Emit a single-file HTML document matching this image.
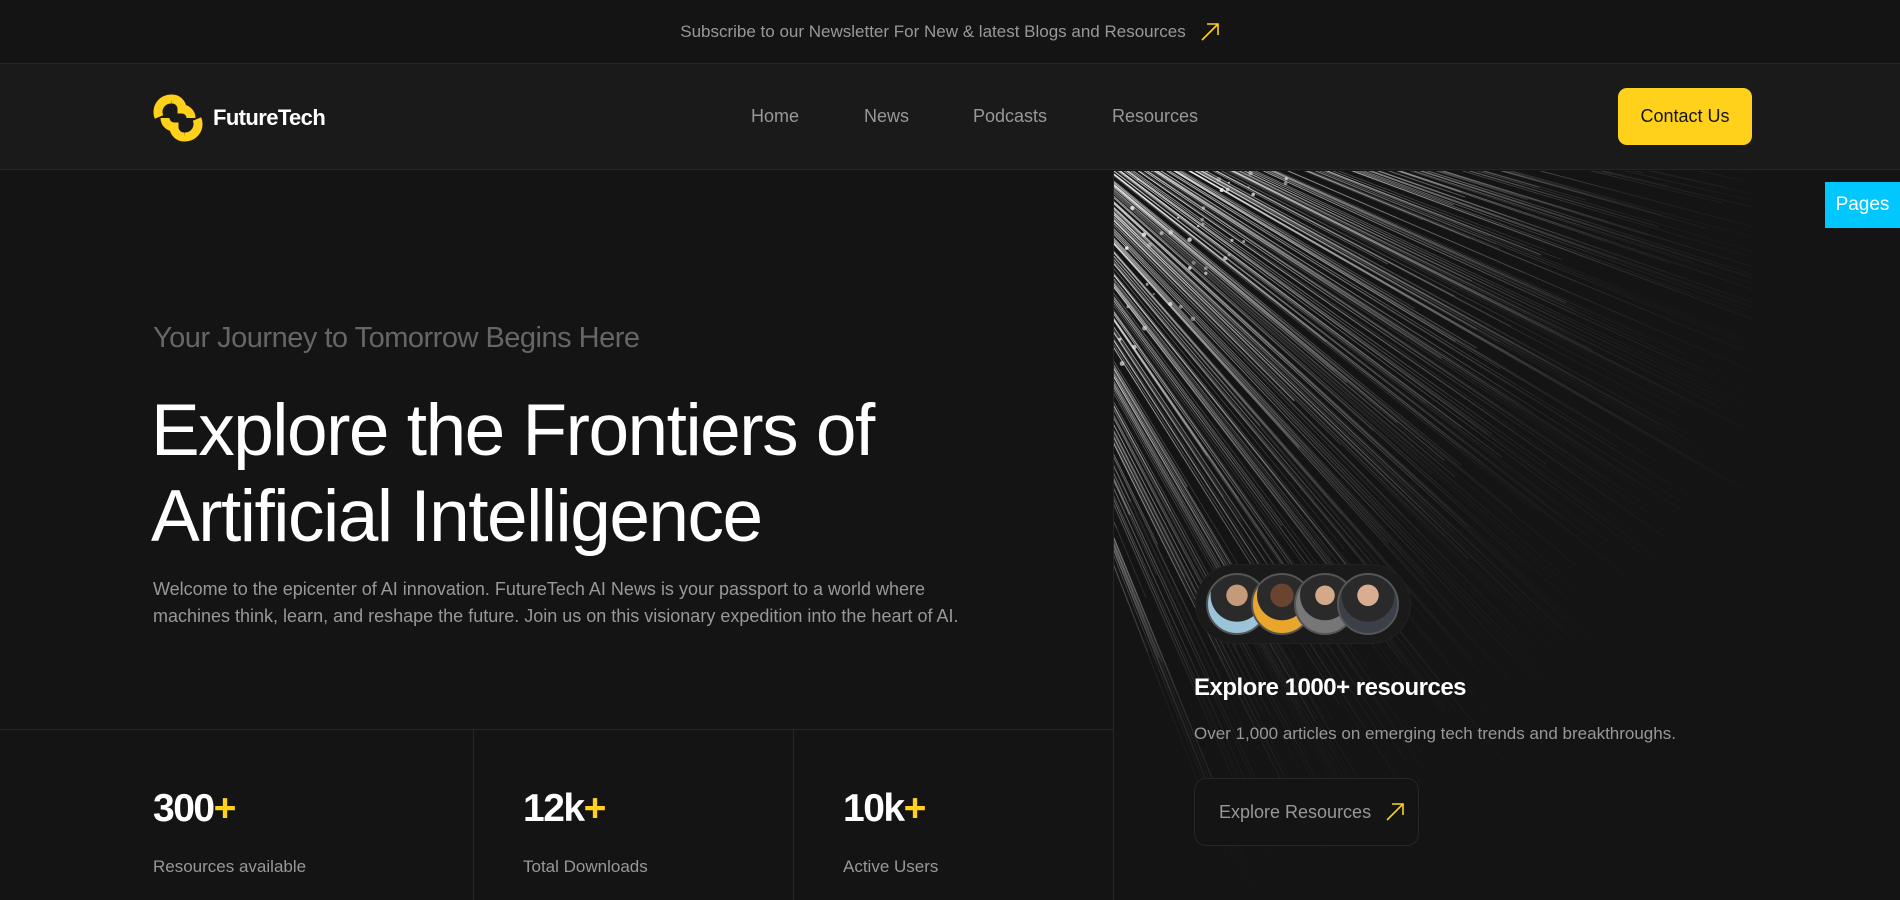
<!DOCTYPE html>
<html><head><meta charset="utf-8"><style>
*{margin:0;padding:0;box-sizing:border-box}
html,body{width:1900px;height:900px;overflow:hidden}
body{background:#141414;font-family:"Liberation Sans",sans-serif;position:relative;color:#fff}
.top{position:absolute;left:0;top:0;width:1900px;height:64px;background:#141414;border-bottom:1px solid #262626;display:flex;align-items:center;justify-content:center;color:#98989a;font-size:17px}
.top svg{margin-left:14px}
.nav{position:absolute;left:0;top:64px;width:1900px;height:106px;background:#1a1a1a;border-bottom:1px solid #262626}
.logo{position:absolute;left:153px;top:29px;display:flex;align-items:center}
.logo span{font-size:22px;font-weight:bold;margin-left:10px;letter-spacing:-0.6px}
.menu a{position:absolute;top:42px;color:#98989a;font-size:18px;text-decoration:none}
.btn{position:absolute;left:1618px;top:24px;width:134px;height:57px;background:#ffd11a;border-radius:9px;color:#141414;font-size:18px;display:flex;align-items:center;justify-content:center}
.pages{position:absolute;left:1825px;top:182px;width:75px;height:46px;background:#00c8ff;color:#fff;font-size:19px;display:flex;align-items:center;justify-content:center}
.vl{position:absolute;width:1px;background:#262626}
.hl{position:absolute;height:1px;background:#262626}
.sub{position:absolute;left:153px;top:322px;font-size:29px;color:#666;letter-spacing:-0.5px}
h1{position:absolute;left:151px;top:388px;font-size:73px;font-weight:normal;line-height:86px;letter-spacing:-1.5px}
.p{position:absolute;left:153px;top:576px;font-size:18px;line-height:27px;color:#98989a;width:830px}
.stat{position:absolute;top:787px}
.stat b{display:block;font-size:39px;letter-spacing:-1.5px;font-weight:bold}
.stat b i{color:#ffd11a;font-style:normal}
.stat span{display:block;margin-top:26px;color:#98989a;font-size:17px}
.res h3{position:absolute;left:1194px;top:674px;font-size:24px;font-weight:bold;letter-spacing:-0.5px}
.res p{position:absolute;left:1194px;top:724px;font-size:17px;color:#98989a}
.eb{position:absolute;left:1194px;top:778px;width:225px;height:68px;border:1px solid #262626;border-radius:12px;display:flex;align-items:center;padding-left:24px;color:#98989a;font-size:18px;background:#141414}
.eb svg{margin-left:14px}
.av{position:absolute;left:1195px;top:564px;width:216px;height:80px;border-radius:40px;background:#1a1a1a;border:1px solid #222}
.av div{position:absolute;top:8px;width:62px;height:62px;border-radius:50%;border:2px solid #555;overflow:hidden}
</style></head><body>
<div class="top">Subscribe to our Newsletter For New &amp; latest Blogs and Resources<svg width="20" height="20" viewBox="0 0 20 20"><path d="M2 18L18 2M7 2H18V13" stroke="#ffd11a" stroke-width="1.6" fill="none"/></svg></div>
<div class="nav">
<div class="logo"><svg width="50" height="50" viewBox="0 0 50 50" fill="none" stroke="#ffd11a" stroke-width="9"><path d="M6 24A13 13 0 0 1 19 6"/><path d="M19 6A10 10 0 0 1 29 16A9 9 0 0 1 38 25"/><path d="M44 26A13 13 0 0 1 31 44"/><path d="M31 44A10 10 0 0 1 21 34A9 9 0 0 1 12 25"/></svg><span>FutureTech</span></div>
<div class="menu"><a style="left:751px">Home</a><a style="left:864px">News</a><a style="left:973px">Podcasts</a><a style="left:1112px">Resources</a></div>
<div class="btn">Contact Us</div>
</div>
<svg id="rays" style="position:absolute;left:1114px;top:171px" width="640" height="729"></svg>
<div class="pages">Pages</div>
<div class="vl" style="left:1113px;top:171px;height:729px"></div>
<div class="hl" style="left:0;top:729px;width:1114px"></div>
<div class="vl" style="left:473px;top:730px;height:170px"></div>
<div class="vl" style="left:793px;top:730px;height:170px"></div>
<div class="sub">Your Journey to Tomorrow Begins Here</div>
<h1>Explore the Frontiers of<br>Artificial Intelligence</h1>
<div class="p">Welcome to the epicenter of AI innovation. FutureTech AI News is your passport to a world where machines think, learn, and reshape the future. Join us on this visionary expedition into the heart of AI.</div>
<div class="stat" style="left:153px"><b>300<i>+</i></b><span>Resources available</span></div>
<div class="stat" style="left:523px"><b>12k<i>+</i></b><span>Total Downloads</span></div>
<div class="stat" style="left:843px"><b>10k<i>+</i></b><span>Active Users</span></div>
<div class="av">
<div style="left:10px;background:radial-gradient(circle at 50% 35%,#c49a7a 0 22%,#2a2a2a 23%,#2a2a2a 55%,#9cc4d8 56%)"></div>
<div style="left:55px;background:radial-gradient(circle at 50% 35%,#6a4430 0 24%,#2a2a2a 25%,#2a2a2a 52%,#e8a72c 53%)"></div>
<div style="left:98px;background:radial-gradient(circle at 50% 35%,#d3a98a 0 20%,#2a2a2a 21%,#2a2a2a 52%,#777 53%)"></div>
<div style="left:141px;background:radial-gradient(circle at 50% 35%,#d9ad90 0 22%,#2a2a2a 23%,#2a2a2a 55%,#3a3f48 56%)"></div>
</div>
<div class="res"><h3>Explore 1000+ resources</h3><p>Over 1,000 articles on emerging tech trends and breakthroughs.</p></div>
<div class="eb">Explore Resources<svg width="20" height="20" viewBox="0 0 20 20"><path d="M2 18L18 2M7 2H18V13" stroke="#ffd11a" stroke-width="1.6" fill="none"/></svg></div>
<script>
var s=document.getElementById('rays'),h='',seed=11;
function r(){seed=(seed*16807)%2147483647;return seed/2147483647;}
var ox=-220,oy=-170;
for(var i=0;i<340;i++){
 var a=0.12+r()*1.08;
 var L=550+r()*650;var x1=ox+Math.cos(a)*L,y1=oy+Math.sin(a)*L;
 var o=(0.25+r()*0.7);
 h+='<line x1="'+ox+'" y1="'+oy+'" x2="'+x1.toFixed(1)+'" y2="'+y1.toFixed(1)+'" stroke="url(#g)" stroke-opacity="'+o.toFixed(2)+'" stroke-width="'+(0.5+r()*0.7).toFixed(2)+'"/>';
}
for(var j=0;j<130;j++){var a2=0.3+r()*0.9,d=240+r()*200;var cx=ox+Math.cos(a2)*d,cy=oy+Math.sin(a2)*d;if(cx<0)continue;h+='<circle cx="'+cx.toFixed(1)+'" cy="'+cy.toFixed(1)+'" r="'+(1+r()*1.4).toFixed(1)+'" fill="#e5e5e5" opacity="'+(0.4+r()*0.6).toFixed(2)+'"/>';}
s.innerHTML='<defs><radialGradient id="g" gradientUnits="userSpaceOnUse" cx="'+ox+'" cy="'+oy+'" r="1050"><stop offset="0.3" stop-color="#fff"/><stop offset="0.5" stop-color="#999"/><stop offset="0.72" stop-color="#2e2e2e"/><stop offset="1" stop-color="#141414" stop-opacity="0"/></radialGradient><clipPath id="c"><rect width="638" height="729"/></clipPath></defs><g clip-path="url(#c)">'+h+'</g>';
</script>
</body></html>
